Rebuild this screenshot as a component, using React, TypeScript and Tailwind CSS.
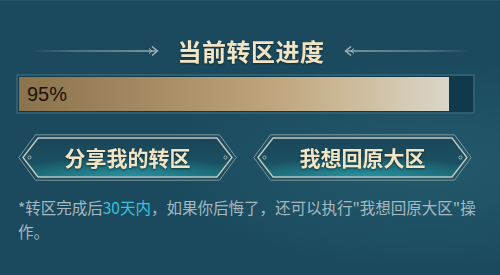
import React from "react";

const FONT = "font-['Noto_Sans_CJK_SC','Noto_Sans',sans-serif]";

function TitleLine({ flip }: { flip?: boolean }) {
  const id = flip ? "tl-r" : "tl-l";
  return (
    <svg width="130" height="12" viewBox="0 0 130 12" className={flip ? "-scale-x-100" : ""}>
      <defs>
        <linearGradient id={id} gradientUnits="userSpaceOnUse" x1="0" x2="124" y1="6" y2="6">
          <stop offset="0" stopColor="#8fa7ad" stopOpacity="0" />
          <stop offset="0.35" stopColor="#8fa7ad" stopOpacity="0.7" />
          <stop offset="1" stopColor="#b8c4bf" stopOpacity="1" />
        </linearGradient>
      </defs>
      <rect x="0" y="5.4" width="124" height="1.2" fill={`url(#${id})`} />
      <path d="M120 1.5 L125.5 6 L120 10.5" fill="none" stroke="#aebbb6" strokeWidth="1.3" />
      <path d="M117 3.5 L120 6 L117 8.5" fill="none" stroke="#aebbb6" strokeWidth="1" />
    </svg>
  );
}

function FrameButton({ label, id }: { label: string; id: string }) {
  return (
    <button className="relative w-[219px] h-[47px] flex items-center justify-center">
      <svg width="219" height="47" viewBox="0 0 219 47" className="absolute inset-0">
        <defs>
          <linearGradient id={`${id}-fill`} x1="0" x2="0" y1="0" y2="1">
            <stop offset="0" stopColor="#1a4658" />
            <stop offset="0.6" stopColor="#1a5062" />
            <stop offset="1" stopColor="#1c6a76" />
          </linearGradient>
          <radialGradient id={`${id}-glow`} cx="0.5" cy="1" r="0.55">
            <stop offset="0" stopColor="#2fb3c0" stopOpacity="0.55" />
            <stop offset="1" stopColor="#2fb3c0" stopOpacity="0" />
          </radialGradient>
        </defs>
        <polygon
          points="0.8,23.5 17.5,0.8 201.5,0.8 218.2,23.5 201.5,46.2 17.5,46.2"
          fill="none"
          stroke="#7e979b"
          strokeWidth="1"
        />
        <polygon
          points="5,23.5 20,4 199,4 214,23.5 199,43 20,43"
          fill={`url(#${id}-fill)`}
          stroke="#c3c8bd"
          strokeWidth="1.4"
        />
        <polygon points="6,23.5 20.5,4.7 198.5,4.7 213,23.5 198.5,42.3 20.5,42.3" fill={`url(#${id}-glow)`} />
        <circle cx="11.5" cy="23.5" r="1.6" fill="none" stroke="#a9b8b6" strokeWidth="0.9" />
        <circle cx="207.5" cy="23.5" r="1.6" fill="none" stroke="#a9b8b6" strokeWidth="0.9" />
      </svg>
      <span className="relative text-[21px] leading-none font-bold text-[#f1e5c6] drop-shadow-[0_1px_1px_rgba(0,0,0,0.5)]">
        {label}
      </span>
    </button>
  );
}

export default function App() {
  const progress = 95;
  return (
    <div
      className={`w-[500px] h-[275px] overflow-hidden bg-[#1b4a5e] bg-[radial-gradient(ellipse_at_85%_60%,#235a6c_0%,#1b4a5e_45%)] border-t border-[#245468] ${FONT}`}
    >
      {/* title */}
      <div className="mt-[38px] flex items-center justify-center gap-[16px] pl-[2px]">
        <TitleLine />
        <h1 className="text-[24px] leading-[24px] font-bold text-[#f0e4c5] tracking-[0.5px] drop-shadow-[0_1px_1px_rgba(0,0,0,0.45)]">
          当前转区进度
        </h1>
        <TitleLine flip />
      </div>

      {/* progress bar */}
      <div className="ml-[16px] w-[459px] mt-[11px] h-[40px] border-[2px] border-[#2f5e71] bg-[#103a4b] p-[1px]">
        <div
          className="h-full flex items-center bg-[linear-gradient(90deg,#8a724c_0%,#a58b62_30%,#bea47b_58%,#cdbc9b_78%,#dbd6ca_100%)]"
          style={{ width: `${progress}%` }}
        >
          <span className="ml-[8px] text-[20px] leading-none text-[#1b1309] font-['Liberation_Sans',sans-serif]">
            {progress}%
          </span>
        </div>
      </div>

      {/* buttons */}
      <div className="mt-[20px] flex gap-[16px] px-[18px]">
        <FrameButton id="b1" label="分享我的转区" />
        <FrameButton id="b2" label="我想回原大区" />
      </div>

      {/* note */}
      <p className="mt-[14px] px-[18px] text-[15.5px] leading-[24px] text-[#a7b9c0]">
        *转区完成后<span className="text-[#3ac4da]">30天内</span>，如果你后悔了，还可以执行"我想回原大区"操作。
      </p>
    </div>
  );
}
